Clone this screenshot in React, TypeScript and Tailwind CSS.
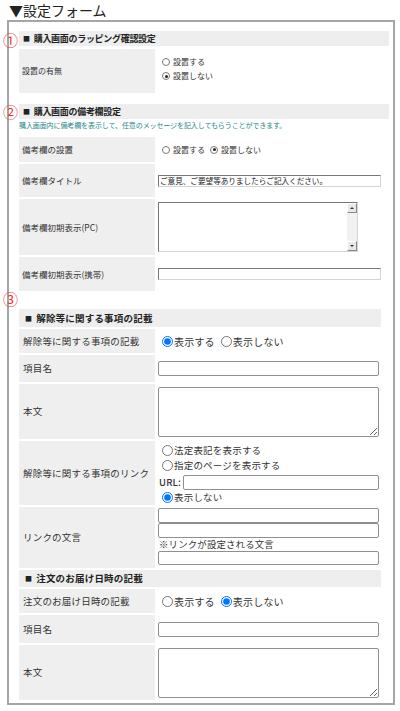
import React from 'react';

// 旧スタイルの小さいラジオ（上の2セクション用）
function OldRadio({ checked }: { checked?: boolean }) {
  return (
    <span className="inline-flex items-center justify-center w-[8px] h-[8px] rounded-full border border-[#7a7a7a] bg-white mr-[3px] shrink-0">
      {checked && <span className="block w-[3px] h-[3px] rounded-full bg-[#222]" />}
    </span>
  );
}

function OldScrollTextarea() {
  return (
    <div className="flex w-[200px] h-[50px] border border-[#d4d4d4] border-t-[#777] border-l-[#777] bg-white">
      <div className="flex-1" />
      <div className="flex flex-col w-[10px] bg-[#f1f1f1]">
        <div className="flex items-center justify-center h-[10px] bg-[#e8e8e8] border border-[#fff] border-r-[#888] border-b-[#888]">
          <span className="block w-0 h-0 border-x-[2px] border-x-transparent border-b-[2px] border-b-[#333]" />
        </div>
        <div className="flex-1" />
        <div className="flex items-center justify-center h-[10px] bg-[#e8e8e8] border border-[#fff] border-r-[#888] border-b-[#888]">
          <span className="block w-0 h-0 border-x-[2px] border-x-transparent border-t-[2px] border-t-[#333]" />
        </div>
      </div>
    </div>
  );
}

function Header({ children, wide }: { children: React.ReactNode; wide?: boolean }) {
  return (
    <div
      className={
        wide
          ? 'flex items-center w-[370px] h-[15px] bg-[#eeeeee] pl-[4px] text-[9px] font-bold text-[#222] tracking-[-0.3px]'
          : 'flex items-center w-[362px] h-[18px] bg-[#eeeeee] pl-[6px] text-[9.5px] font-bold text-[#222]'
      }
    >
      <span className="text-[7px] mr-[4px]">■</span>
      {children}
    </div>
  );
}

function Label({ children, className }: { children: React.ReactNode; className?: string }) {
  return (
    <div className={'flex items-center w-[136px] shrink-0 bg-[#efefef] pl-[3px] ' + (className ?? '')}>
      {children}
    </div>
  );
}

function Radio({ name, checked, children }: { name: string; checked?: boolean; children: React.ReactNode }) {
  return (
    <label className="inline-flex items-center mr-[6px]">
      <input type="radio" name={name} defaultChecked={checked} className="m-0 mr-[1px] w-[11px] h-[11px]" />
      <span>{children}</span>
    </label>
  );
}

const inputCls = 'block w-[221px] h-[15px] border border-[#8f8f8f] rounded-[2px] bg-white';
const areaCls = 'block w-[221px] h-[50px] border border-[#8f8f8f] rounded-[2px] bg-white';

export default function App() {
  return (
    <div className="w-[400px] h-[711px] bg-white text-[#333] font-['Noto_Sans_CJK_JP',sans-serif]">
      <div className="h-[20px] pl-[9px] text-[14px] leading-[20px] text-[#222]">▼設定フォーム</div>

      <div className="relative ml-[7px] w-[388px] h-[685px] border-2 border-[#a6a6a6] pl-[10px] pt-[9px]">
        {/* 注釈の番号 */}
        <span className="absolute left-[-6px] top-[10px] text-[15px] leading-[15px] text-[#e8382f]">①</span>
        <span className="absolute left-[-6px] top-[82px] text-[15px] leading-[15px] text-[#e8382f]">②</span>
        <span className="absolute left-[-6px] top-[269px] text-[15px] leading-[15px] text-[#e8382f]">③</span>

        {/* ① ラッピング */}
        <Header wide>購入画面のラッピング確認設定</Header>
        <div className="flex gap-[3px] mt-[3px] h-[44px]">
          <Label className="text-[8px]">設置の有無</Label>
          <div className="flex flex-col pt-[6px] pl-[4px] text-[8px] leading-[14px]">
            <div className="flex items-center"><OldRadio />設置する</div>
            <div className="flex items-center"><OldRadio checked />設置しない</div>
          </div>
        </div>

        {/* ② 備考欄 */}
        <div className="mt-[11px]">
          <Header wide>購入画面の備考欄設定</Header>
        </div>
        <div className="h-[18px] text-[7px] leading-[12px] text-[#25898b] tracking-[-0.1px]">
          購入画面内に備考欄を表示して、任意のメッセージを記入してもらうことができます。
        </div>
        <div className="flex flex-col gap-[2px] text-[8.5px]">
          <div className="flex gap-[3px] h-[25px]">
            <Label>備考欄の設置</Label>
            <div className="flex items-center pl-[4px] text-[8px]">
              <OldRadio />
              <span className="mr-[5px]">設置する</span>
              <OldRadio checked />
              <span>設置しない</span>
            </div>
          </div>
          <div className="flex gap-[3px] h-[33px]">
            <Label>備考欄タイトル</Label>
            <div className="flex items-center">
              <div className="w-[223px] h-[12px] border border-[#d4d4d4] border-t-[#777] border-l-[#777] bg-white text-[7.6px] leading-[10px] pl-[1px] text-[#222] whitespace-nowrap overflow-hidden">
                ご意見、ご要望等ありましたらご記入ください。
              </div>
            </div>
          </div>
          <div className="flex gap-[3px] h-[56px]">
            <Label>備考欄初期表示(PC)</Label>
            <div className="flex items-center">
              <OldScrollTextarea />
            </div>
          </div>
          <div className="flex gap-[3px] h-[34px]">
            <Label>備考欄初期表示(携帯)</Label>
            <div className="flex items-center">
              <div className="w-[223px] h-[12px] border border-[#d4d4d4] border-t-[#777] border-l-[#777] bg-white" />
            </div>
          </div>
        </div>

        {/* ③ 解除等 */}
        <div className="mt-[18px] flex flex-col gap-[2px] text-[9.5px] tracking-[0.2px]">
          <Header>解除等に関する事項の記載</Header>
          <div className="flex gap-[3px] h-[24px]">
            <Label className="pl-[4px]">解除等に関する事項の記載</Label>
            <div className="flex items-center pl-[4px] text-[10px]">
              <Radio name="kaijo" checked>表示する</Radio>
              <Radio name="kaijo">表示しない</Radio>
            </div>
          </div>
          <div className="flex gap-[3px] h-[27px]">
            <Label className="pl-[4px]">項目名</Label>
            <div className="flex items-center">
              <input className={inputCls} readOnly />
            </div>
          </div>
          <div className="flex gap-[3px] h-[55px]">
            <Label className="pl-[4px]">本文</Label>
            <div className="flex items-center">
              <textarea className={areaCls} readOnly />
            </div>
          </div>
          <div className="flex gap-[3px] h-[64px]">
            <Label className="pl-[4px]">解除等に関する事項のリンク</Label>
            <div className="flex flex-col pt-[3px] text-[9.5px] leading-[13px]">
              <div className="pl-[4px]"><Radio name="link">法定表記を表示する</Radio></div>
              <div className="pl-[4px]"><Radio name="link">指定のページを表示する</Radio></div>
              <div className="flex items-center h-[16px] my-[1px] pl-[1px]">
                <span className="w-[24px] font-medium">URL:</span>
                <input className="block w-[196px] h-[15px] border border-[#8f8f8f] rounded-[2px] bg-white" readOnly />
              </div>
              <div className="pl-[4px]"><Radio name="link" checked>表示しない</Radio></div>
            </div>
          </div>
          <div className="flex gap-[3px] h-[61px]">
            <Label className="pl-[4px]">リンクの文言</Label>
            <div className="flex flex-col pt-[1px]">
              <input className={inputCls} readOnly />
              <input className={inputCls} readOnly />
              <div className="pl-[1px] text-[9.4px] leading-[13px]">※リンクが設定される文言</div>
              <input className="block w-[221px] h-[14px] border border-[#8f8f8f] rounded-[2px] bg-white" readOnly />
            </div>
          </div>

          <div className="flex items-center w-[362px] h-[17px] bg-[#eeeeee] pl-[6px] text-[9.5px] font-bold text-[#222]">
            <span className="text-[7px] mr-[4px]">■</span>
            注文のお届け日時の記載
          </div>
          <div className="flex gap-[3px] h-[24px]">
            <Label className="pl-[4px]">注文のお届け日時の記載</Label>
            <div className="flex items-center pl-[4px] text-[10px]">
              <Radio name="todoke">表示する</Radio>
              <Radio name="todoke" checked>表示しない</Radio>
            </div>
          </div>
          <div className="flex gap-[3px] h-[28px]">
            <Label className="pl-[4px]">項目名</Label>
            <div className="flex items-center">
              <input className={inputCls} readOnly />
            </div>
          </div>
          <div className="flex gap-[3px] h-[55px]">
            <Label className="pl-[4px]">本文</Label>
            <div className="flex items-center">
              <textarea className={areaCls} readOnly />
            </div>
          </div>
        </div>
      </div>
    </div>
  );
}
